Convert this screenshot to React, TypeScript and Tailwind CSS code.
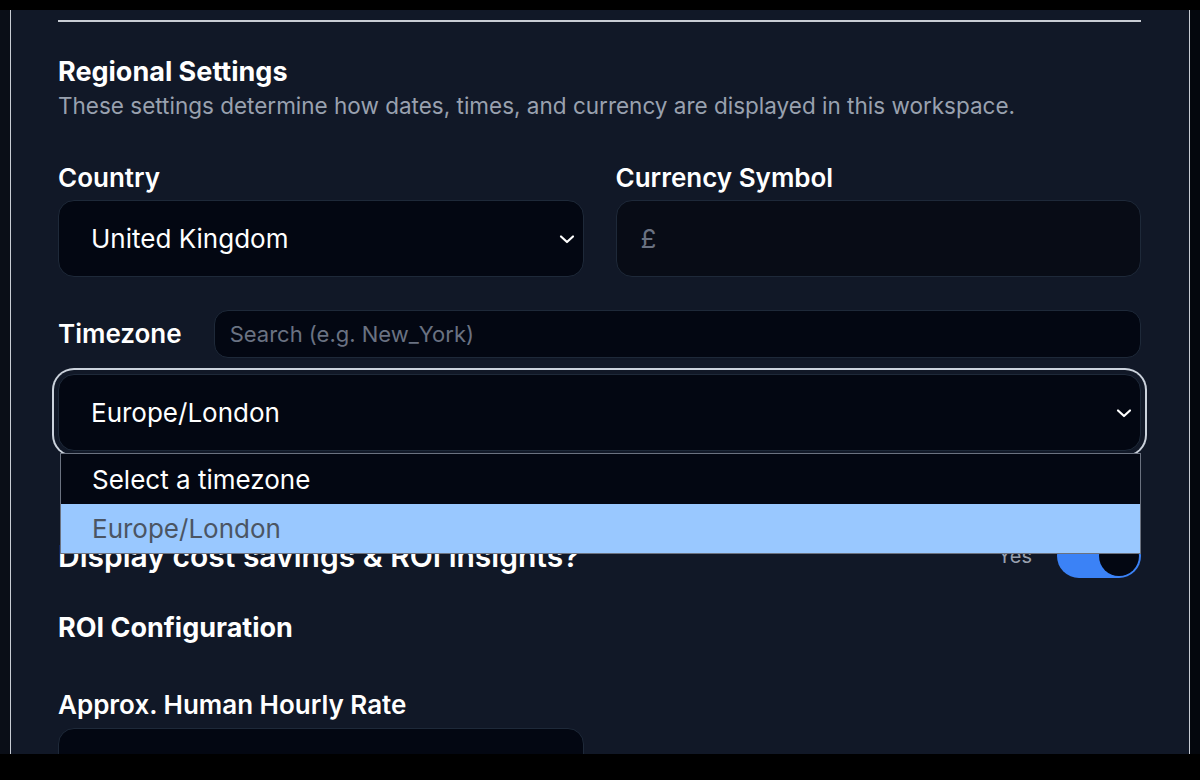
import { useState } from 'react';

const TIMEZONES = ['Europe/London'];

function Chevron() {
  return (
    <svg width="20" height="20" viewBox="0 0 20 20" fill="none" className="text-white">
      <path d="M4 7.5l6 5.5 6-5.5" stroke="currentColor" strokeWidth="2.2" strokeLinecap="round" strokeLinejoin="round" />
    </svg>
  );
}

function Toggle({ on }: { on: boolean }) {
  return (
    <div className={`relative w-[84px] h-[44px] rounded-full ${on ? 'bg-[#3b82f6]' : 'bg-gray-700'}`}>
      <div className={`absolute top-[2px] w-[40px] h-[40px] rounded-full bg-[#030712] ${on ? 'right-[2px]' : 'left-[2px]'}`} />
    </div>
  );
}

export default function App() {
  const [timezone] = useState('Europe/London');
  const [showRoi] = useState(true);

  return (
    <div className="w-[1200px] h-[780px] bg-black overflow-hidden" style={{ fontFamily: 'Inter, "Noto Sans", sans-serif' }}>
      <div className="h-[10px]" />
      <div className="flex h-[744px]">
        <div className="w-[10px] bg-[#0a0e17]" />
        <div className="w-[1180px] border-x border-[#c8ccd4] bg-[#111827] pl-[47px] pr-[48px] overflow-hidden">
          {/* Divider from the section above */}
          <div className="mt-[10px] h-[2px] bg-[#c8ccd4]" />

          {/* Regional Settings */}
          <h2 className="mt-[34px] text-[27px] leading-[32px] font-bold text-white">Regional Settings</h2>
          <p className="mt-[4px] text-[22.5px] leading-[28px] text-gray-400">
            These settings determine how dates, times, and currency are displayed in this workspace.
          </p>

          <div className="mt-[42px] grid grid-cols-2 gap-x-[32px]">
            <div>
              <label className="block text-[26px] leading-[32px] font-semibold text-white">Country</label>
              <div className="mt-[6px] h-[77px] rounded-[16px] border border-gray-800 bg-[#030712] flex items-center justify-between pl-[32px] pr-[6px]">
                <span className="text-[26px] text-white">United Kingdom</span>
                <Chevron />
              </div>
            </div>
            <div>
              <label className="block text-[26px] leading-[32px] font-semibold text-white">Currency Symbol</label>
              <div className="mt-[6px] h-[77px] rounded-[16px] border border-gray-800 bg-[#080c16] flex items-center pl-[24px]">
                <span className="text-[26px] text-gray-500">£</span>
              </div>
            </div>
          </div>

          {/* Timezone search + select */}
          <div className="mt-[33px] flex items-center gap-[32px]">
            <label className="text-[26px] leading-[32px] font-semibold text-white">Timezone</label>
            <div className="flex-1 h-[48px] rounded-[14px] border border-gray-800 bg-[#030712] flex items-center pl-[15px]">
              <span className="text-[22px] text-gray-500">Search (e.g. New_York)</span>
            </div>
          </div>

          <div className="relative mt-[16px]">
            <div className="h-[77px] rounded-[16px] border border-gray-800 bg-[#030712] ring-2 ring-[#cbd2dc] ring-offset-4 ring-offset-[#111827] flex items-center justify-between pl-[32px] pr-[6px]">
              <span className="text-[26px] text-white">{timezone}</span>
              <Chevron />
            </div>

            {/* Open option list */}
            <div className="absolute z-10 left-[2px] right-0 top-[79px] border border-[#6b7280] text-[26px]">
              <div className="h-[50px] bg-[#030712] text-white flex items-center pl-[31px]">Select a timezone</div>
              {TIMEZONES.map((tz) => (
                <div key={tz} className="h-[49px] bg-[#99c8ff] text-[#4b5563] flex items-center pl-[31px]">{tz}</div>
              ))}
            </div>
          </div>

          {/* ROI toggle row */}
          <div className="mt-[83px] flex items-center justify-between h-[44px]">
            <span className="text-[30px] font-semibold text-white">Display cost savings &amp; ROI insights?</span>
            <div className="flex items-center gap-[25px]">
              <span className="text-[20px] text-gray-400">Yes</span>
              <Toggle on={showRoi} />
            </div>
          </div>

          <h3 className="mt-[34px] text-[27px] leading-[32px] font-bold text-white">ROI Configuration</h3>

          <div className="mt-[45px] grid grid-cols-2 gap-x-[32px]">
            <div>
              <label className="block text-[26px] leading-[32px] font-semibold text-white">Approx. Human Hourly Rate</label>
              <div className="mt-[7px] h-[77px] rounded-[16px] border border-gray-800 bg-[#030712]" />
            </div>
          </div>
        </div>
        <div className="w-[10px] bg-[#04070d]" />
      </div>
    </div>
  );
}
